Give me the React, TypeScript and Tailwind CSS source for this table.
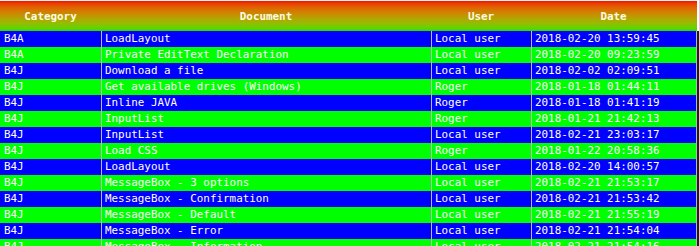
const rows = [
  ['B4A', 'LoadLayout', 'Local user', '2018-02-20 13:59:45'],
  ['B4A', 'Private EditText Declaration', 'Local user', '2018-02-20 09:23:59'],
  ['B4J', 'Download a file', 'Local user', '2018-02-02 02:09:51'],
  ['B4J', 'Get available drives (Windows)', 'Roger', '2018-01-18 01:44:11'],
  ['B4J', 'Inline JAVA', 'Roger', '2018-01-18 01:41:19'],
  ['B4J', 'InputList', 'Roger', '2018-01-21 21:42:13'],
  ['B4J', 'InputList', 'Local user', '2018-02-21 23:03:17'],
  ['B4J', 'Load CSS', 'Roger', '2018-01-22 20:58:36'],
  ['B4J', 'LoadLayout', 'Local user', '2018-02-20 14:00:57'],
  ['B4J', 'MessageBox - 3 options', 'Local user', '2018-02-21 21:53:17'],
  ['B4J', 'MessageBox - Confirmation', 'Local user', '2018-02-21 21:53:42'],
  ['B4J', 'MessageBox - Default', 'Local user', '2018-02-21 21:55:19'],
  ['B4J', 'MessageBox - Error', 'Local user', '2018-02-21 21:54:04'],
  ['B4J', 'MessageBox - Information', 'Local user', '2018-02-21 21:54:16'],
];

const headers = ['Category', 'Document', 'User', 'Date'];
const grid = 'grid grid-cols-[101px_330px_100px_165px] w-[697px]';

export default function App() {
  return (
    <div
      className="w-[699px] h-[246px] overflow-hidden bg-[#1e1e1e] text-[10.9px] leading-[16px]"
      style={{ fontFamily: '"DejaVu Sans Mono", "Liberation Mono", monospace' }}
    >
      {/* Header */}
      <div className="bg-white">
        <div className={`${grid} h-[31px] pt-px bg-linear-to-b from-[#f00a00] to-[#12e000] border-t border-[#f4f4f4]`}>
          {headers.map((h) => (
            <div key={h} className="flex items-center justify-center font-bold text-[#fffbe0]">
              {h}
            </div>
          ))}
        </div>
      </div>

      {/* Body */}
      {rows.map((r, i) => (
        <div
          key={i}
          className={`${grid} h-[16px] border-r border-[#b8b8b8] text-white ${
            i % 2 === 0 ? 'bg-[#0000ff]' : 'bg-[#00ff00]'
          }`}
        >
          <div className="pl-1 whitespace-nowrap overflow-hidden">{r[0]}</div>
          <div className="pl-[3px] border-l border-[#b8b8b8] whitespace-nowrap overflow-hidden">{r[1]}</div>
          <div className="pl-[3px] border-l border-[#b8b8b8] whitespace-nowrap overflow-hidden">{r[2]}</div>
          <div className="pl-[3px] border-l border-[#b8b8b8] whitespace-nowrap overflow-hidden">{r[3]}</div>
        </div>
      ))}
    </div>
  );
}
